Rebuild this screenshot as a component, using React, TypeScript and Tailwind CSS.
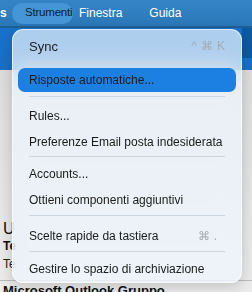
import React from "react"

const font = { fontFamily: '"Liberation Sans", Arial, sans-serif' }

function Sep({ cls }: { cls: string }) {
  return <div className={`mx-[16px] h-px bg-[#c9d6e0] ${cls}`} />
}

function Item({ label, shortcut, active, big, h = "h-[26px]", scPad = "" }: { label: string; shortcut?: React.ReactNode; active?: boolean; big?: boolean; h?: string; scPad?: string }) {
  return (
    <div
      className={`flex items-center justify-between mx-[5px] px-[11px] ${h} rounded-[7px] ${
        active ? "bg-[#1c80e3]" : ""
      }`}
    >
      <span className={`${big ? "text-[13px]" : "text-[12px]"} text-[#1b1b1b] leading-none`}>{label}</span>
      {shortcut && <span className={`flex gap-[4px] text-[12px] text-[#a3adb6] leading-none ${scPad}`}>{shortcut}</span>}
    </div>
  )
}

export default function App() {
  return (
    <div className="relative w-[252px] h-[292px] overflow-hidden flex flex-col bg-[#e4e4e4]" style={font}>
      {/* Menu bar */}
      <div className="h-[28px] shrink-0 flex items-center bg-gradient-to-b from-[#3585c6] to-[#2b78b8] border-b-2 border-[#1f5f96]">
        <span className="text-[12px] font-bold text-white w-[12px]">s</span>
        <div className="h-[21px] w-[61px] rounded-full bg-[#4596d6] flex items-center pl-[13px]">
          <span className="text-[11.5px] text-[#0d1b2a] tracking-[-0.2px]">Strumenti</span>
        </div>
        <span className="ml-[6px] text-[12px] text-white">Finestra</span>
        <span className="ml-[27px] text-[12px] text-white">Guida</span>
      </div>

      {/* Blue strip behind */}
      <div className="h-[42px] shrink-0 bg-gradient-to-b from-[#1872cd] to-[#1a6fc4] flex justify-end">
        <div className="w-[10px] h-[30px] bg-[#0b5aa3]" />
      </div>

      {/* Content behind */}
      <div className="flex-1 min-h-0 overflow-hidden bg-gradient-to-b from-[#dcdcdc] to-[#ececec] flex flex-col pl-[3px]">
        <div className="h-[150px] shrink-0" />
        <span className="shrink-0 text-[16px] text-[#111] leading-[18px]">U</span>
        <span className="shrink-0 text-[12px] font-bold text-[#111] leading-[16px]">Te</span>
        <span className="shrink-0 mt-[2px] text-[12px] text-[#222] leading-[16px]">Te</span>
        <div className="shrink-0 mt-[8px] h-px bg-[#bdbdbd] -ml-[3px]" />
        <span className="shrink-0 mt-[2px] text-[13px] font-bold text-[#111] leading-[16px] whitespace-nowrap">Microsoft Outlook Gruppo</span>
      </div>

      {/* Dropdown menu */}
      <div className="absolute left-[12px] top-[29px] w-[230px] h-[254px] rounded-[11px] bg-[#eef7fd]/70 backdrop-blur-md border border-white/60 shadow-[0_4px_14px_rgba(0,0,0,0.18)] pt-[3px] flex flex-col">
        <Item
          label="Sync"
          big
          shortcut={
            <>
              <span>^</span>
              <span>⌘</span>
              <span>K</span>
            </>
          }
        />
        <Sep cls="mt-[3px] mb-[5px]" />
        <Item label="Risposte automatiche..." active h="h-[24px]" />
        <Sep cls="mt-[4px] mb-[6px]" />
        <Item label="Rules..." />
        <Item label="Preferenze Email posta indesiderata" />
        <Sep cls="mt-[1px] mb-[4px]" />
        <Item label="Accounts..." />
        <Item label="Ottieni componenti aggiuntivi" />
        <Sep cls="mt-[2px] mb-[7px]" />
        <Item
          label="Scelte rapide da tastiera"
          scPad="pr-[8px]"
          shortcut={
            <>
              <span>⌘</span>
              <span>.</span>
            </>
          }
        />
        <Sep cls="mt-[2px] mb-[4px]" />
        <Item label="Gestire lo spazio di archiviazione" />
      </div>
    </div>
  )
}
